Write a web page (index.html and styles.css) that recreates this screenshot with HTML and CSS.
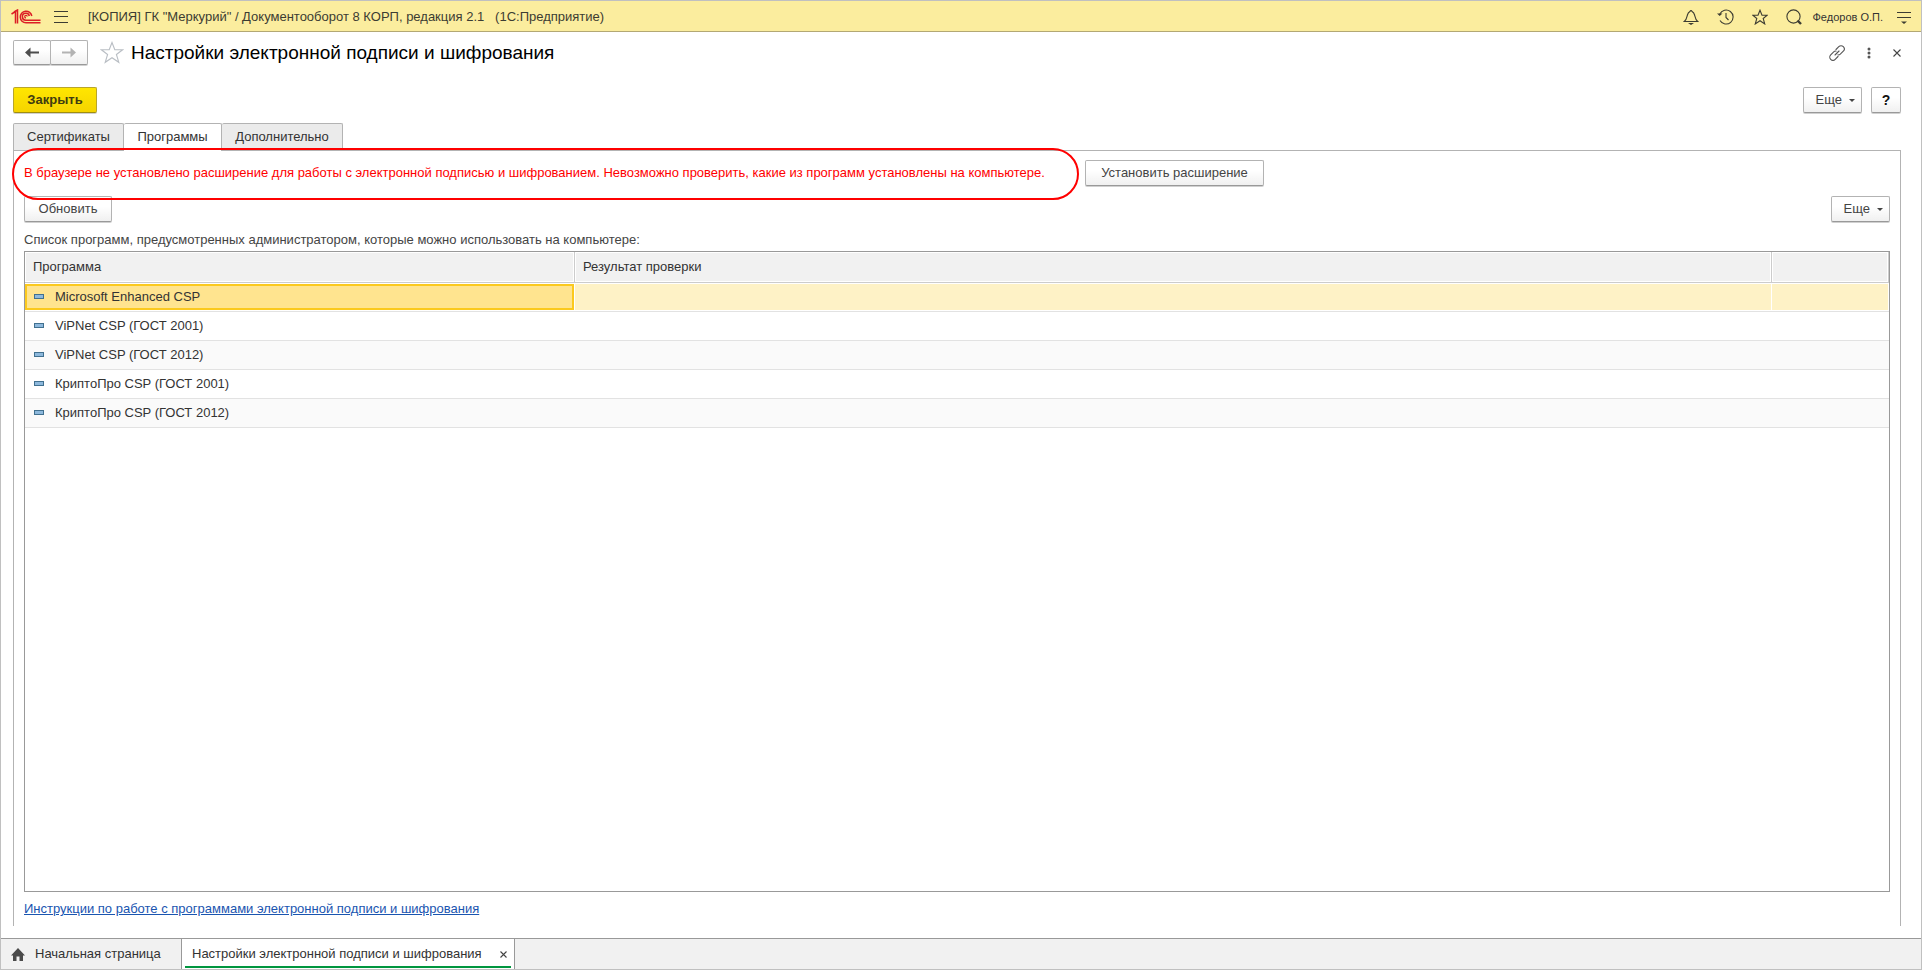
FILE: index.html
```html
<!DOCTYPE html>
<html lang="ru">
<head>
<meta charset="utf-8">
<title>Настройки электронной подписи и шифрования</title>
<link rel="stylesheet" href="styles.css">
</head>
<body>
<div class="window">
  <header class="topbar">
    <svg class="logo" width="30" height="16" viewBox="0 0 30 16" fill="none" stroke="#dc1e26" aria-label="1С">
      <path d="M.5 5L4.500 2.500V14.500" stroke-width="1.500"/><path d="M3 3L6.500 1V14.500" stroke-width="1.500"/>
      <path d="M20.800 7A5.800 5.800 0 1 0 15 13.800H29.500" stroke-width="1.500"/>
      <path d="M18.300 7A3.500 3.500 0 1 0 15 11.300H29.500" stroke-width="1.500"/>
      <path d="M16.300 7.500A1.300 1.300 0 1 0 15 8.900" stroke-width="1.200"/>
    </svg>
    <button class="icon-btn menu-btn" aria-label="Меню"><svg width="14" height="12" viewBox="0 0 14 12" stroke="#3c3c32" fill="none"><path d="M0 .5H14M0 5.500H14M0 11.500H14"/></svg></button>
    <div class="app-title">[КОПИЯ] ГК "Меркурий" / Документооборот 8 КОРП, редакция 2.1 &nbsp; (1С:Предприятие)</div>
    <div class="tools">
      <button class="icon-btn" aria-label="Уведомления"><svg width="16" height="16" viewBox="0 0 16 16" fill="none" stroke="#3c3c32" stroke-width="1.100"><path d="M1.300 12.500C3.500 11 3.800 8.500 4.400 6C4.900 4 6.300 2.900 7.200 2.300A.8 .8 0 0 1 8.800 2.300C9.700 2.900 11.100 4 11.600 6C12.200 8.500 12.500 11 14.700 12.500Z"/><path d="M5 14H11L8 16Z" fill="#3c3c32" stroke="none"/></svg></button>
      <button class="icon-btn" aria-label="История"><svg width="17" height="16" viewBox="0 0 17 16" fill="none" stroke="#3c3c32" stroke-width="1.100"><path d="M2.800 5A7 7 0 1 1 3 11.500"/><path d="M9 4V8.500L11.500 11"/><path d="M0 4.500H5.500L2.700 7Z" fill="#3c3c32" stroke="none"/></svg></button>
      <button class="icon-btn" aria-label="Избранное"><svg width="16" height="16" viewBox="0 0 16 16" fill="none" stroke="#3c3c32" stroke-width="1.100"><path d="M8 1.200L10 6.200H15.200L11.200 9.500L12.700 14.900L8 11.700L3.300 14.900L4.800 9.500L.8 6.200H6Z"/></svg></button>
      <button class="icon-btn" aria-label="Поиск"><svg width="16" height="16" viewBox="0 0 16 16" fill="none" stroke="#3c3c32" stroke-width="1.100"><circle cx="7.500" cy="7.500" r="6.600"/><path d="M11.500 11.500L15 15" stroke-width="2.400"/></svg></button>
      <button class="user">Федоров О.П.</button>
      <button class="icon-btn" aria-label="Настройка"><svg width="14" height="14" viewBox="0 0 14 14" fill="none" stroke="#3c3c32"><path d="M0 2.500H14M0 7.500H14"/><path d="M4 11.500H10L7 14Z" fill="#3c3c32" stroke="none"/></svg></button>
    </div>
  </header>

  <main class="page">
    <div class="heading">
      <div class="history">
        <button class="btn" aria-label="Назад"><svg width="14" height="11" viewBox="0 0 14 11"><path d="M0 5.500L5.500 .5V4.500H14V6.500H5.500V10.500Z" fill="#4d4d4d"/></svg></button>
        <button class="btn" aria-label="Вперед"><svg width="14" height="11" viewBox="0 0 14 11"><path d="M14 5.500L8.500 .5V4.500H0V6.500H8.500V10.500Z" fill="#b3b3b3"/></svg></button>
      </div>
      <button class="icon-btn fav" aria-label="В избранное"><svg width="24" height="24" viewBox="0 0 24 24" fill="none" stroke="#b9bec4" stroke-width="1.100"><path d="M12 1.500L14.800 8.800H22.600L16.400 13.500L18.800 21.300L12 16.700L5.200 21.300L7.600 13.500L1.400 8.800H9.200Z"/></svg></button>
      <h1>Настройки электронной подписи и шифрования</h1>
      <div class="page-tools">
        <button class="icon-btn" aria-label="Ссылка"><svg width="16" height="16" viewBox="0 0 16 16" fill="none" stroke="#555" stroke-width="1.100" stroke-linecap="round"><path d="M7 4.500L9.800 1.700A2.700 2.700 0 0 1 14.300 6.200L11.300 9.200A2.700 2.700 0 0 1 9 9.900"/><path d="M9 11.500L6.200 14.300A2.700 2.700 0 0 1 1.700 9.800L4.700 6.800A2.700 2.700 0 0 1 7 6.100"/><path d="M6 10L10 6"/></svg></button>
        <button class="icon-btn" aria-label="Еще действия"><svg width="4" height="12" viewBox="0 0 4 12" fill="#555"><circle cx="2" cy="2" r="1.500"/><circle cx="2" cy="6" r="1.500"/><circle cx="2" cy="10" r="1.500"/></svg></button>
        <button class="icon-btn" aria-label="Закрыть форму"><svg width="8" height="8" viewBox="0 0 8 8" stroke="#444" stroke-width="1.100"><path d="M.5 .5L7.500 7.500M7.500 .5L.5 7.500"/></svg></button>
      </div>
    </div>

    <div class="commands">
      <button class="btn primary">Закрыть</button>
      <div class="commands-right">
        <button class="btn more">Еще</button>
        <button class="btn help">?</button>
      </div>
    </div>

    <div class="tabs" role="tablist">
      <button class="tab" role="tab">Сертификаты</button>
      <button class="tab active" role="tab" aria-selected="true">Программы</button>
      <button class="tab" role="tab">Дополнительно</button>
    </div>

    <section class="panel">
      <div class="notice">
        <p class="warning">В браузере не установлено расширение для работы с электронной подписью и шифрованием. Невозможно проверить, какие из программ установлены на компьютере.</p>
        <button class="btn install">Установить расширение</button>
      </div>
      <div class="list-commands">
        <button class="btn">Обновить</button>
        <button class="btn more">Еще</button>
      </div>
      <p class="caption" id="list-caption">Список программ, предусмотренных администратором, которые можно использовать на компьютере:</p>
      <div class="list">
        <table aria-labelledby="list-caption">
          <colgroup><col class="col-name"><col><col class="col-extra"></colgroup>
          <thead><tr><th>Программа</th><th>Результат проверки</th><th></th></tr></thead>
          <tbody>
            <tr class="selected"><td><span class="mark"></span>Microsoft Enhanced CSP</td><td></td><td></td></tr>
            <tr><td><span class="mark"></span>ViPNet CSP (ГОСТ 2001)</td><td></td><td></td></tr>
            <tr><td><span class="mark"></span>ViPNet CSP (ГОСТ 2012)</td><td></td><td></td></tr>
            <tr><td><span class="mark"></span>КриптоПро CSP (ГОСТ 2001)</td><td></td><td></td></tr>
            <tr><td><span class="mark"></span>КриптоПро CSP (ГОСТ 2012)</td><td></td><td></td></tr>
          </tbody>
        </table>
      </div>
      <a class="guide" href="#">Инструкции по работе с программами электронной подписи и шифрования</a>
    </section>
  </main>

  <nav class="taskbar">
    <button class="task home"><svg width="14" height="13" viewBox="0 0 14 13" fill="#4a4a4a"><path d="M7 0L14 7.500H12V13H8.500V8.500H5.500V13H2V7.500H0Z"/></svg>Начальная страница</button>
    <div class="task current">
      <button class="task-name">Настройки электронной подписи и шифрования</button>
      <button class="icon-btn" aria-label="Закрыть вкладку"><svg width="7" height="7" viewBox="0 0 7 7" stroke="#444" stroke-width="1.100"><path d="M.5 .5L6.500 6.500M6.500 .5L.5 6.500"/></svg></button>
    </div>
  </nav>
</div>
</body>
</html>
```
FILE: styles.css
```css
* { box-sizing: border-box; }
body {
  margin: 0;
  font: 13px/16px "Liberation Sans", Arial, sans-serif;
  color: #333;
}
button { font: inherit; color: inherit; padding: 0; border: 0; background: none; }
svg { display: block; }
p, h1 { margin: 0; }

.window {
  display: flex;
  flex-direction: column;
  min-height: 100vh;
  border: 1px solid #c0c0c0;
  background: #fff;
}

.topbar {
  display: flex;
  align-items: center;
  height: 31px;
  padding: 1px 10px 0;
  background: #fbed9e;
  border-bottom: 1px solid #b3a874;
}
.menu-btn { margin: 0 20px 0 13px; }
.app-title { color: #3c3c32; }
.tools { display: flex; align-items: center; gap: 18px; margin-left: auto; }
.user { font-size: 11px; margin: 0 -4px 0 -7px; }

.page { display: flex; flex-direction: column; flex: 1; padding: 8px 20px 12px 12px; }

.btn {
  min-width: 88px;
  height: 26px;
  padding: 0 13px;
  color: #444;
  border: 1px solid #b3b3b3;
  border-bottom-color: #999;
  border-radius: 2px;
  background: linear-gradient(#fff 40%, #f0f0f0);
  box-shadow: 0 1px 0 #d0d0d0;
}
.primary {
  min-width: 84px;
  font-weight: bold;
  color: #413c10;
  background: linear-gradient(#ffe600, #f5d400);
  border-color: #b8a52c;
  border-bottom-color: #a08e10;
}
.more { min-width: 59px; padding: 0 6px 0 12px; }
.more::after {
  content: "";
  display: inline-block;
  margin-left: 7px;
  vertical-align: 2px;
  border: 3px solid transparent;
  border-top-color: #444;
  border-bottom: 0;
}
.help { min-width: 30px; padding: 0; font-weight: bold; font-size: 14px; color: #111; }
.install { min-width: 179px; }

.heading { display: flex; align-items: center; height: 26px; }
.history { display: flex; align-self: flex-start; }
.history .btn { display: grid; place-items: center; min-width: 38px; height: 25px; padding: 0; }
.history .btn + .btn { margin-left: -1px; }
.fav { margin: 0 7px 0 12px; }
h1 { font-size: 19px; line-height: 24px; font-weight: normal; color: #000; }
.page-tools { display: flex; align-items: center; gap: 22px; margin-left: auto; }

.commands { display: flex; justify-content: space-between; margin: 21px 0 10px; }
.commands-right { display: flex; gap: 9px; }

.tabs { display: flex; }
.tab {
  min-width: 98px;
  height: 27px;
  padding: 0 13px;
  background: #ebebeb;
  border: 1px solid #b3b3b3;
  border-bottom: 0;
  border-radius: 2px 2px 0 0;
}
.tab:first-child { min-width: 111px; }
.tab:last-child { min-width: 121px; }
.tab + .tab { border-left: 0; }
.tab.active { position: relative; height: 28px; margin-bottom: -1px; padding-bottom: 1px; background: #fff; }

.panel {
  display: flex;
  flex-direction: column;
  flex: 1;
  padding: 9px 10px;
  border: 1px solid #b3b3b3;
  border-bottom: 0;
}
.notice { display: flex; align-items: center; gap: 15px; }
.warning { position: relative; flex: 0 1 1046px; color: #f00; }
.warning::after {
  content: "";
  position: absolute;
  inset: -17px -9px -19px -12px;
  border: 2px solid #f00;
  border-radius: 26px;
  pointer-events: none;
}
.list-commands { display: flex; justify-content: space-between; margin: 10px 0; }
.caption { color: #444; margin-bottom: 3px; }

.list { flex: 1; border: 1px solid #999; }
table { width: 100%; table-layout: fixed; border-collapse: separate; border-spacing: 0; }
.col-name { width: 550px; }
.col-extra { width: 117px; }
th, td { height: 29px; padding: 0 8px; text-align: left; font-weight: normal; border-bottom: 1px solid #e2e2e2; }
th {
  height: 31px;
  background: #f1f1f1;
  border-right: 1px solid #ccc;
  border-bottom-color: #ccc;
  box-shadow: inset 0 0 0 1px #fff;
}
tbody tr:nth-child(odd) td { background: #fafafa; }
tbody tr:nth-child(even) td { background: #fff; }
tbody tr.selected td {
  background: #fef2c6;
  box-shadow: inset 0 1px #fff, inset 0 -1px #fff, inset -1px 0 #fff;
}
tbody tr.selected td:first-child {
  background: #ffe48f;
  box-shadow: inset 0 1px #fff, inset 0 -1px #fff, inset -1px 0 #fff,
    inset 0 3px #fbc91e, inset 0 -3px #fbc91e, inset 2px 0 #fbc91e, inset -3px 0 #fbc91e;
}
.mark {
  display: inline-block;
  width: 10px;
  height: 5px;
  margin: 0 11px 0 1px;
  vertical-align: 2px;
  border: 1px solid #41708f;
  background: #8db8dc;
}
.guide { align-self: flex-start; margin-top: 9px; color: #1a55b0; }

.taskbar { display: flex; height: 31px; background: #f1f1f1; border-top: 1px solid #999; }
.task { display: flex; align-items: center; }
.home { gap: 10px; min-width: 180px; padding: 0 10px; }
.current {
  gap: 9px;
  padding: 0 7px 0 10px;
  background: linear-gradient(#00963f, #00963f) center bottom 1px / calc(100% - 6px) 2px no-repeat #fff;
  border: solid #999;
  border-width: 0 1px;
}
.task-name { min-width: 299px; text-align: left; }
```
